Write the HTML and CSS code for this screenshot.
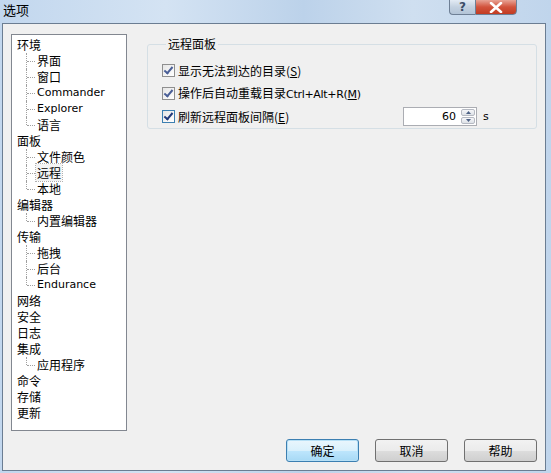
FILE: index.html
```html
<!DOCTYPE html>
<html>
<head>
<meta charset="utf-8">
<link rel="stylesheet" href="styles.css">
</head>
<body>
<div class="window">
  <div class="titlebar">
    <span class="title">选项</span>
    <div class="caps">
      <div class="cap help">?</div>
      <div class="cap close">
        <svg width="14" height="11" viewBox="0 0 14 11"><path d="M2 1 L12 10 M12 1 L2 10" stroke="#fff" stroke-width="2.6" stroke-linecap="round"/></svg>
      </div>
    </div>
  </div>
  <div class="client">
    <div class="main">
      <div class="tree">
        <div class="node root">环境</div>
        <div class="node child">界面</div>
        <div class="node child">窗口</div>
        <div class="node child latin">Commander</div>
        <div class="node child latin">Explorer</div>
        <div class="node child last">语言</div>
        <div class="node root">面板</div>
        <div class="node child">文件颜色</div>
        <div class="node child"><span class="sel">远程</span></div>
        <div class="node child last">本地</div>
        <div class="node root">编辑器</div>
        <div class="node child last">内置编辑器</div>
        <div class="node root">传输</div>
        <div class="node child">拖拽</div>
        <div class="node child">后台</div>
        <div class="node child latin last">Endurance</div>
        <div class="node root">网络</div>
        <div class="node root">安全</div>
        <div class="node root">日志</div>
        <div class="node root">集成</div>
        <div class="node child last">应用程序</div>
        <div class="node root">命令</div>
        <div class="node root">存储</div>
        <div class="node root">更新</div>
      </div>
      <div class="panel">
        <fieldset class="group">
          <legend>远程面板</legend>
          <div class="row"><span class="cb"></span><span>显示无法到达的目录(<u>S</u>)</span></div>
          <div class="row"><span class="cb"></span><span>操作后自动重载目录<span class="lat">Ctrl+Alt+R(<u>M</u>)</span></span></div>
          <div class="row">
            <div class="rowlabel"><span class="cb focus"></span><span>刷新远程面板间隔(<u>E</u>)</span></div>
            <div class="spin">
              <span class="val">60</span>
              <div class="arrows">
                <div class="arr"><svg width="7" height="4" viewBox="0 0 7 4"><path d="M0 4 L3.5 0 L7 4Z" fill="#4d6185"/></svg></div>
                <div class="arr"><svg width="7" height="4" viewBox="0 0 7 4"><path d="M0 0 L3.5 4 L7 0Z" fill="#4d6185"/></svg></div>
              </div>
            </div>
            <span class="unit">s</span>
          </div>
        </fieldset>
      </div>
    </div>
    <div class="footer">
      <button class="btn default">确定</button>
      <button class="btn">取消</button>
      <button class="btn">帮助</button>
    </div>
  </div>
</div>
</body>
</html>
```
FILE: styles.css
```css
html, body {
  margin: 0;
  padding: 0;
}
body {
  width: 551px;
  height: 473px;
  overflow: hidden;
  font-family: "Noto Sans CJK SC", "DejaVu Sans", sans-serif;
  font-size: 12px;
  color: #000;
  background: #b9d1ea;
}
.window {
  width: 551px;
  height: 473px;
  box-sizing: border-box;
  background: linear-gradient(90deg, #c2d7ee 0%, #d4e3f3 30%, #bcd2ea 55%, #cfdff0 75%, #c0d5ec 100%);
  display: flex;
  flex-direction: column;
  padding: 0 5px 2px 2px;
}
.titlebar {
  height: 23px;
  display: flex;
  justify-content: space-between;
  align-items: flex-start;
  flex: none;
}
.title {
  font-size: 13px;
  line-height: 20px;
  margin-left: 1px;
  color: #000;
}
.caps {
  display: flex;
  margin-right: 29px;
  margin-top: -1px;
}
.cap {
  height: 16px;
  box-sizing: border-box;
  border: 1px solid #6e7f95;
  display: flex;
  align-items: center;
  justify-content: center;
}
.help {
  width: 26px;
  border-right: none;
  border-radius: 0 0 0 4px;
  background: linear-gradient(#e3ebf4, #c3d1e0 50%, #b3c4d7);
  color: #3c4d66;
  font-family: "DejaVu Sans", sans-serif;
  font-weight: bold;
  font-size: 12px;
  line-height: 14px;
}
.close {
  width: 42px;
  border-radius: 0 0 4px 0;
  background: linear-gradient(#e8a395, #d2533c 50%, #c23b22);
}
.client {
  flex: 1;
  background: #f0f0f0;
  border: 1px solid #6b7d92;
  display: flex;
  flex-direction: column;
  padding: 10px 8px 0 8px;
}
.main {
  display: flex;
  gap: 20px;
}
.tree {
  width: 116px;
  height: 397px;
  box-sizing: border-box;
  border: 1px solid #828790;
  background: #fff;
  padding: 2px 0 0 5px;
  flex: none;
}
.node {
  height: 16px;
  line-height: 16px;
  white-space: nowrap;
  position: relative;
}
.child {
  padding-left: 20px;
}
.child::before {
  content: "";
  position: absolute;
  left: 9px;
  top: 0;
  height: 16px;
  border-left: 1px dotted #a0a0a0;
}
.child.last::before {
  height: 8px;
}
.child::after {
  content: "";
  position: absolute;
  left: 10px;
  top: 8px;
  width: 8px;
  border-top: 1px dotted #a0a0a0;
}
.latin {
  font-family: "DejaVu Sans", sans-serif;
  font-size: 11px;
}
.sel {
  outline: 1px dotted #b0b0b0;
  background: #f4f4f4;
  padding: 0 1px;
  margin-left: -1px;
}
.panel {
  flex: 1;
}
.group {
  margin: 3px 0 0 0;
  padding: 8px 0 0 14px;
  border: 1px solid #d5dfe5;
  border-radius: 3px;
  width: 390px;
  box-sizing: border-box;
  height: 92px;
}
legend {
  padding: 0 2px;
  margin-left: 4px;
  font-size: 12px;
  line-height: 14px;
}
.row {
  display: flex;
  align-items: center;
  height: 23px;
  line-height: 16px;
  white-space: nowrap;
}
.rowlabel {
  display: flex;
  align-items: center;
  width: 241px;
}
.cb {
  width: 13px;
  height: 13px;
  box-sizing: border-box;
  border: 1px solid #8f8f8f;
  background: linear-gradient(135deg, #e6e6e6, #ffffff);
  margin-right: 3px;
  position: relative;
  flex: none;
}
.cb::after {
  content: "";
  position: absolute;
  left: 3px;
  top: 0px;
  width: 3px;
  height: 7px;
  border-right: 2px solid #4a5f97;
  border-bottom: 2px solid #4a5f97;
  transform: rotate(40deg);
}
.cb.focus {
  border-color: #3c7fb1;
}
.cb.focus::after {
  border-color: #21397a;
}
.lat {
  font-family: "DejaVu Sans", sans-serif;
  font-size: 11px;
  letter-spacing: -0.3px;
}
.spin {
  width: 74px;
  height: 19px;
  box-sizing: border-box;
  border: 1px solid #abadb3;
  background: #fff;
  display: flex;
  align-items: center;
  justify-content: flex-end;
}
.val {
  font-family: "DejaVu Sans", sans-serif;
  font-size: 11px;
  margin-right: 5px;
}
.arrows {
  display: flex;
  flex-direction: column;
  gap: 1px;
  margin-right: 1px;
}
.arr {
  width: 14px;
  height: 7px;
  box-sizing: border-box;
  border: 1px solid #b5b9c2;
  border-radius: 2px;
  background: linear-gradient(#f6f7f9, #dde1e7);
  display: flex;
  align-items: center;
  justify-content: center;
}
.arr svg {
  width: 5px;
  height: 3px;
}
.unit {
  margin-left: 6px;
  font-family: "DejaVu Sans", sans-serif;
  font-size: 11px;
}
u {
  text-decoration: underline;
}
.footer {
  display: flex;
  justify-content: flex-end;
  gap: 16px;
  margin-top: 8px;
  padding-right: 0;
}
.btn {
  width: 73px;
  height: 23px;
  box-sizing: border-box;
  border: 1px solid #707070;
  border-radius: 3px;
  background: linear-gradient(#f2f2f2 0%, #ebebeb 50%, #dddddd 51%, #cfcfcf 100%);
  font-family: "Noto Sans CJK SC", sans-serif;
  font-size: 12px;
  color: #000;
  padding: 0;
}
.btn.default {
  border-color: #3c7fb1;
  box-shadow: inset 0 0 0 1px #b7e0f6;
  background: linear-gradient(#eaf6fd 0%, #d9f0fc 50%, #bee6fd 51%, #a7d9f5 100%);
}
```
